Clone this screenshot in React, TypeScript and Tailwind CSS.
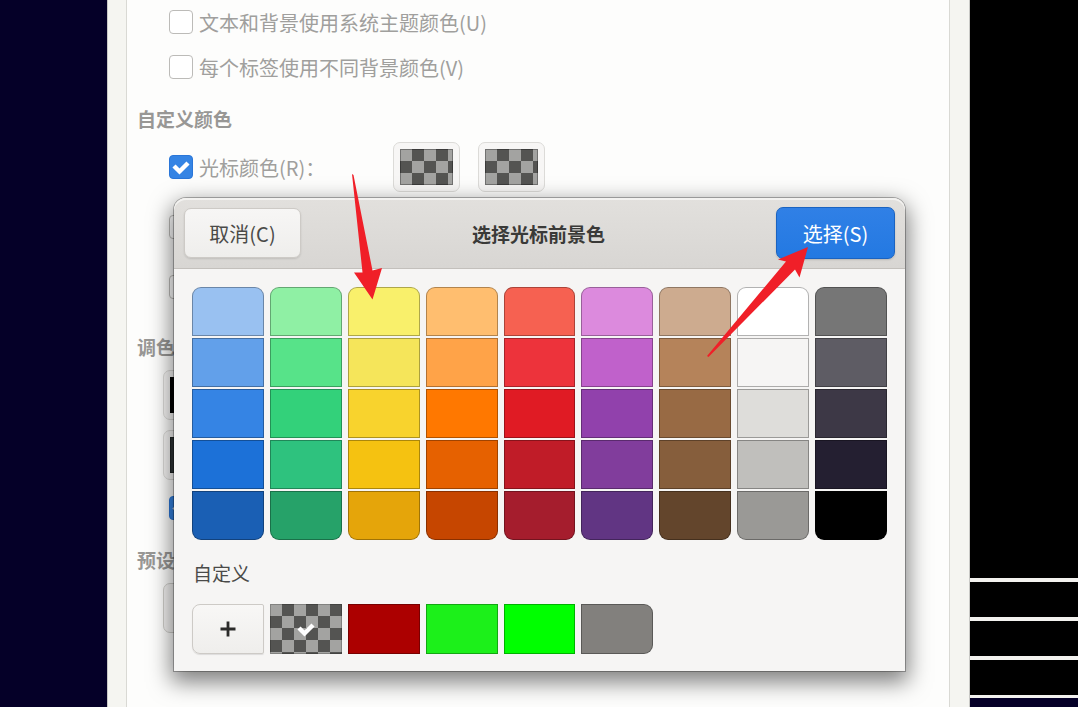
import { FC, ReactNode } from "react";
import clsx from "clsx";

const palette = [
  ["#99c1f1", "#8ff0a4", "#f9f06b", "#ffbe6f", "#f66151", "#dc8add", "#cdab8f", "#ffffff", "#767676"],
  ["#62a0ea", "#57e389", "#f5e55a", "#ffa348", "#ed333b", "#c061cb", "#b5835a", "#f6f5f4", "#5e5c64"],
  ["#3584e4", "#33d17a", "#f8d32d", "#ff7800", "#e01b24", "#9141ac", "#986a44", "#deddda", "#3d3846"],
  ["#1c71d8", "#2ec27e", "#f5c211", "#e66100", "#c01c28", "#813d9c", "#865e3c", "#c0bfbc", "#241f31"],
  ["#1a5fb4", "#26a269", "#e5a50a", "#c64600", "#a51d2d", "#613583", "#63452c", "#9a9996", "#000000"],
];

const customColors = ["#ac0000", "#1cf01a", "#00ff00", "#82807d"];

const Check: FC<{ className?: string }> = ({ className }) => (
  <svg viewBox="0 0 18 16" className={className} aria-hidden="true">
    <path d="M2 7l5.500 5.500L16 4" fill="none" stroke="#fff" strokeWidth="4.400" />
  </svg>
);

interface CheckOptionProps {
  children?: ReactNode;
  label?: string;
  checked?: boolean;
}

const CheckOption: FC<CheckOptionProps> = ({ children, label, checked }) => (
  <label className="flex items-center gap-[6px]">
    <span className="relative flex h-6 w-6 shrink-0">
      <input
        type="checkbox"
        defaultChecked={checked}
        aria-label={label}
        className="peer h-6 w-6 appearance-none rounded-[4px] border border-[#bcbbb8] bg-white checked:border-[#2a76d8] checked:bg-[#3584e4]"
      />
      <Check className="pointer-events-none absolute top-1 left-[3px] hidden h-4 w-[18px] peer-checked:block" />
    </span>
    {children && <span className="pt-[2px] text-xl leading-7">{children}</span>}
  </label>
);

const Heading: FC<{ children: ReactNode; className: string }> = ({ children, className }) => (
  <h2 className={clsx("mb-[9px] pl-[10px] font-bold text-[#989795]", className)}>{children}</h2>
);

const ColorButton: FC<{ label: string; swatch: string }> = ({ label, swatch }) => (
  <button
    aria-label={label}
    className="h-[50px] w-[67px] shrink-0 rounded-[7px] border border-[#dcdbd8] bg-[#f7f6f5] p-[6px]"
  >
    <span className={clsx("block h-9 w-[53px] border border-black/30", swatch)} />
  </button>
);

const checker = "bg-[repeating-conic-gradient(#545452_0_25%,#a3a3a1_0_50%)] bg-[length:24px_24px] bg-origin-border";

const Preferences = () => (
  <section className="mr-[19px] ml-[18px] min-h-screen border-x border-[#d9d9d4] bg-[#fdfdfc] leading-7 text-[#a09f9d]">
    <div className="pl-[42px]">
      <div className="flex h-11 items-center">
        <CheckOption>文本和背景使用系统主题颜色(U)</CheckOption>
      </div>
      <div className="flex h-[46px] items-center">
        <CheckOption>每个标签使用不同背景颜色(V)</CheckOption>
      </div>
    </div>

    <Heading className="mt-[15px]">自定义颜色</Heading>
    <div className="flex flex-col gap-[10px] pl-[42px]">
      <div className="flex h-[50px] items-center gap-[18px]">
        <div className="w-[206px]">
          <CheckOption checked>光标颜色(R)：</CheckOption>
        </div>
        <ColorButton label="光标前景色" swatch={checker} />
        <ColorButton label="光标背景色" swatch={checker} />
      </div>
      <div className="flex h-[50px] items-center">
        <CheckOption label="高亮颜色" />
      </div>
      <div className="flex h-[50px] items-center">
        <CheckOption label="粗体颜色" />
      </div>
    </div>

    <Heading className="mt-[21px]">调色</Heading>
    <div className="flex flex-col gap-[10px] pl-9">
      <ColorButton label="调色板 0" swatch="bg-black" />
      <ColorButton label="调色板 8" swatch="bg-[#2e3436]" />
    </div>
    <div className="mt-[10px] flex h-9 items-center pl-[42px]">
      <CheckOption label="粗体使用亮色" checked />
    </div>

    <Heading className="mt-5">预设</Heading>
    <div className="pl-9">
      <button aria-label="预设" className="h-[50px] w-40 rounded-[7px] border border-[#cfceca] bg-[#f3f2f1]" />
    </div>
  </section>
);

const ColorDialog = () => (
  <div
    role="dialog"
    aria-labelledby="dialog-title"
    className="relative w-full rounded-t-[12px] bg-[#f6f5f4] text-[#4a4a48] shadow-[0_0_0_1px_rgba(0,0,0,0.28),0_8px_22px_3px_rgba(0,0,0,0.5)]"
  >
    <header className="flex h-[71px] items-center justify-between rounded-t-[12px] border-b border-[#c3c0bc] bg-linear-to-b from-[#e2e0dd] to-[#d8d6d3] px-[10px] shadow-[inset_0_2px_0_#f3f2f0]">
      <button className="h-[50px] w-[117px] rounded-[7px] border border-[#cdcac6] bg-linear-to-b from-[#f7f6f5] to-[#efeeec] pt-[2px] text-xl leading-7 shadow-[0_1px_2px_rgba(0,0,0,0.12)]">
        取消(C)
      </button>
      <h1 id="dialog-title" className="pt-[2px] font-bold text-[#3a3a38]">
        选择光标前景色
      </h1>
      <button className="h-[52px] w-[119px] rounded-[7px] border border-[#1b63c0] bg-linear-to-b from-[#3080e6] to-[#2379e2] pt-[2px] text-xl leading-7 text-white shadow-[0_1px_2px_rgba(0,0,0,0.15)]">
        选择(S)
      </button>
    </header>

    <div className="px-[18px] pt-[18px] pb-[17px]">
      <div className="grid grid-cols-9 gap-x-[6px] gap-y-[2px]">
        {palette.map((row, y) =>
          row.map((color) => (
            <button
              key={color}
              aria-label={color}
              style={{ backgroundColor: color }}
              className={clsx(
                "h-[49px] border border-black/30",
                y === 0 && "rounded-t-[9px]",
                y === palette.length - 1 && "rounded-b-[9px]",
              )}
            />
          )),
        )}
      </div>

      <h2 className="mt-[19px] mb-[17px] pl-px leading-7">自定义</h2>
      <div className="grid grid-cols-9 gap-x-[6px]">
        <button
          aria-label="添加颜色"
          className="flex h-[50px] items-center justify-center rounded-l-[8px] rounded-r-[2px] border border-[#cdcac6] bg-linear-to-b from-[#f8f7f6] to-[#efeeec] shadow-[0_1px_1px_rgba(0,0,0,0.1)]"
        >
          <svg viewBox="0 0 16 16" className="h-4 w-4" aria-hidden="true">
            <path d="M8 0.500v15M0.500 8h15" stroke="#2b2b2a" strokeWidth="2.800" />
          </svg>
        </button>
        <button
          aria-label="透明"
          className={clsx("flex h-[50px] items-center justify-center border border-black/20", checker)}
        >
          <Check className="h-4 w-[18px]" />
        </button>
        {customColors.map((color) => (
          <button
            key={color}
            aria-label={color}
            style={{ backgroundColor: color }}
            className="h-[50px] border border-black/30 last:rounded-r-[9px]"
          />
        ))}
      </div>
    </div>

    {/* pointer to the yellow swatch */}
    <svg viewBox="0 0 30 126" className="pointer-events-none absolute -top-6 left-[178px] h-[126px] w-[30px]" aria-hidden="true">
      <path d="M0 0L1.500 1 20.500 96.500 30 94 20.500 125.500 2 98.500 10.500 98.500Z" fill="#f01f28" />
    </svg>
    {/* pointer to the select button */}
    <svg viewBox="0 0 102 110" className="pointer-events-none absolute top-[49px] right-24 h-[110px] w-[102px]" aria-hidden="true">
      <path d="M101 0L71 12.500 79 14.500 0 109 1.500 110 88 22.500 92.500 30.500Z" fill="#f01f28" />
    </svg>
  </div>
);

export default function App() {
  return (
    <div className="flex min-h-screen bg-[#050028] font-['Noto_Sans_CJK_SC',sans-serif] text-[19px] leading-7">
      <div className="w-[107px] shrink-0" />
      <main className="relative min-w-0 flex-1 border-x border-[#c9c9c6] bg-[#f5f5f1]">
        <Preferences />
        <div className="absolute inset-x-0 top-[198px] pr-16 pl-[66px]">
          <ColorDialog />
        </div>
      </main>
      <aside className="flex w-[108px] shrink-0 flex-col">
        <div className="flex-1 bg-black" />
        <div className="h-[39px] border-t-4 border-[#f3f2ef] bg-black" />
        <div className="h-[39px] border-t-4 border-[#f3f2ef] bg-black" />
        <div className="h-[39px] border-t-4 border-[#f3f2ef] bg-black" />
        <div className="h-3 border-t-[3px] border-[#f3f2ef]" />
      </aside>
    </div>
  );
}
